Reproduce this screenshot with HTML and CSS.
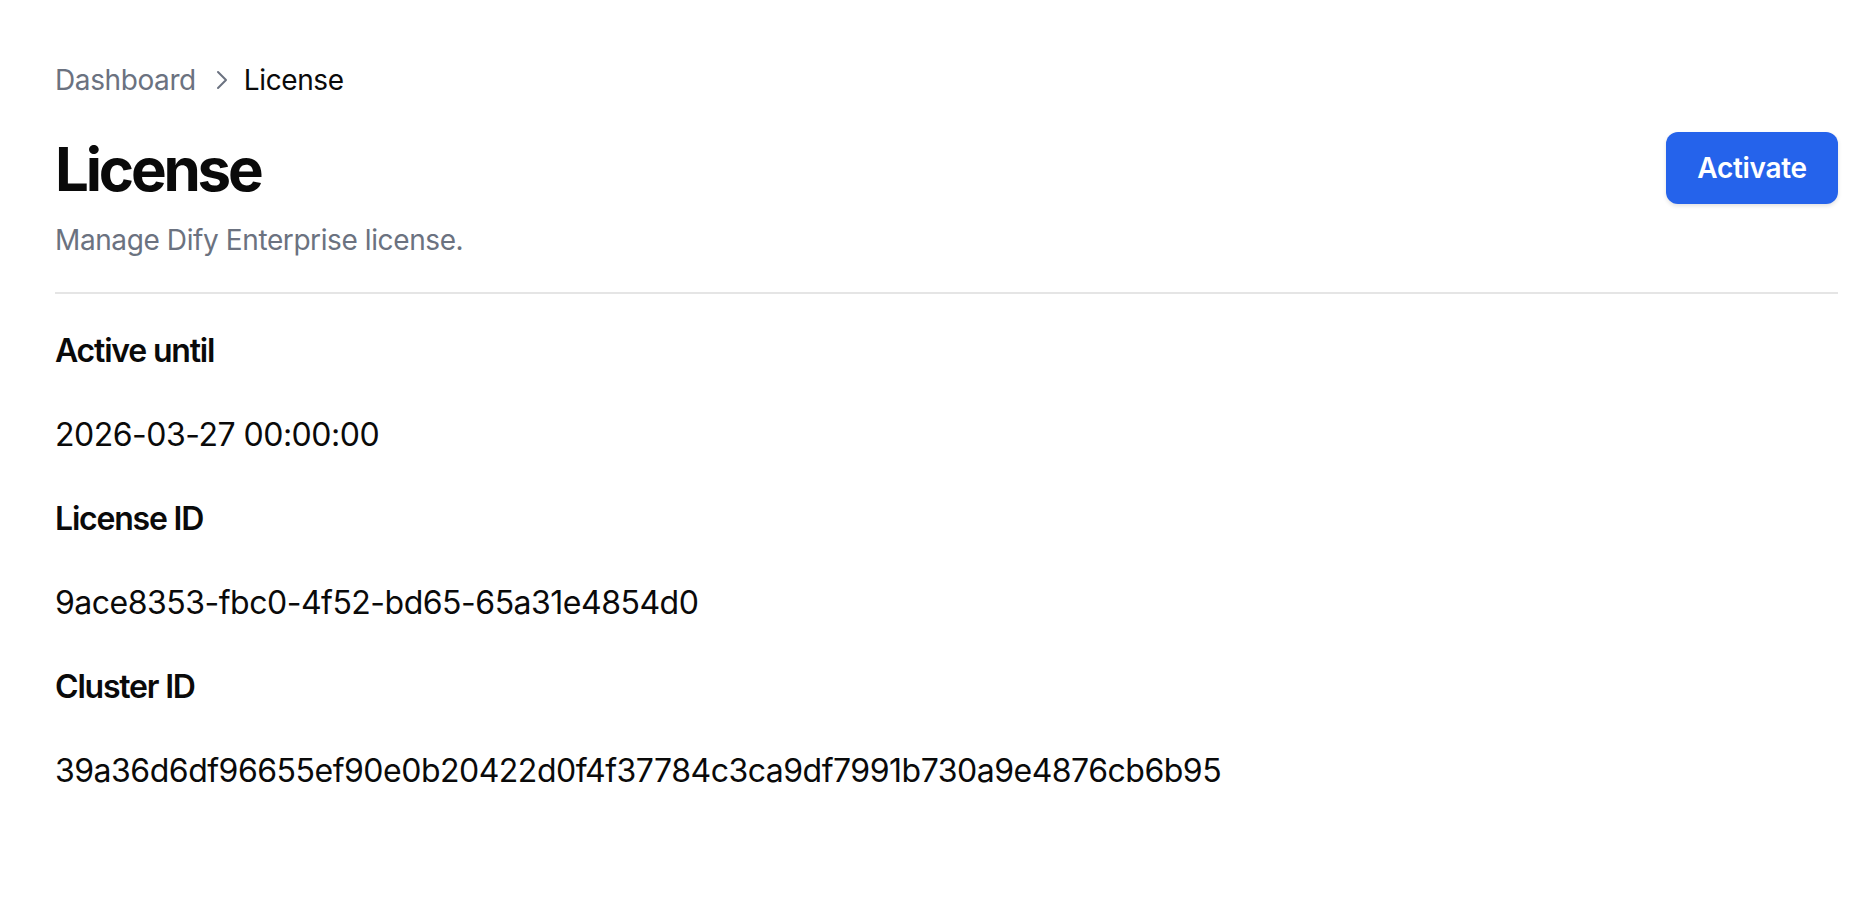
FILE: index.html
```html
<!DOCTYPE html>
<html lang="en">
<head>
  <meta charset="UTF-8" />
  <meta name="viewport" content="width=device-width, initial-scale=1.0"/>
  <title>License</title>
  <link rel="stylesheet" href="styles.css">
</head>
<body>
  <main class="page">
    <nav class="crumbs">
      <a href="#" class="crumbs__link">Dashboard</a>
      <svg class="crumbs__sep" viewBox="0 0 24 24" width="32" height="32" fill="none" stroke="currentColor" stroke-width="1.5" stroke-linecap="round" stroke-linejoin="round">
        <path d="M9 6l6 6-6 6"/>
      </svg>
      <span class="crumbs__current">License</span>
    </nav>

    <header class="head">
      <div class="head__text">
        <h1 class="head__title">License</h1>
        <p class="head__sub">Manage Dify Enterprise license.</p>
      </div>
      <button class="btn" type="button">Activate</button>
    </header>

    <dl class="info">
      <dt>Active until</dt>
      <dd>2026-03-27 00:00:00</dd>
      <dt>License ID</dt>
      <dd>9ace8353-fbc0-4f52-bd65-65a31e4854d0</dd>
      <dt>Cluster ID</dt>
      <dd>39a36d6df96655ef90e0b20422d0f4f37784c3ca9df7991b730a9e4876cb6b95</dd>
    </dl>
  </main>
</body>
</html>
```

FILE: styles.css
```css
html, body {
  height: 100%;
}

body {
  margin: 0;
  font-family: Inter, "Noto Sans", sans-serif;
  background: #fff;
  color: #0a0a0a;
}

.page {
  padding: 60px 26px 0 55px;
}

.crumbs {
  display: flex;
  align-items: center;
  font-size: 28px;
  line-height: 40px;
  letter-spacing: -0.4px;
}

.crumbs__link {
  color: #6b7280;
  text-decoration: none;
}

.crumbs__sep {
  width: 32px;
  height: 32px;
  color: #6b7280;
  margin: 0 6px 0 10px;
}

.crumbs__current {
  color: #0a0a0a;
}

.head {
  display: flex;
  justify-content: space-between;
  align-items: flex-start;
  margin-top: 33px;
  padding-bottom: 32px;
  border-bottom: 2px solid #e5e5e5;
}

.head__title {
  margin: 0;
  font-size: 60px;
  line-height: 72px;
  font-weight: 700;
  letter-spacing: -3.2px;
}

.head__sub {
  margin: 15px 0 0;
  font-size: 28px;
  line-height: 40px;
  letter-spacing: -0.4px;
  color: #6b7280;
}

.btn {
  margin-top: -1px;
  width: 172px;
  height: 72px;
  border: none;
  border-radius: 12px;
  background: #2563eb;
  color: #fff;
  font-family: inherit;
  font-size: 28px;
  font-weight: 600;
  letter-spacing: -0.3px;
  box-shadow: 0 2px 4px rgba(0, 0, 0, 0.12);
  cursor: pointer;
}

.info {
  margin: 0;
  padding-top: 33px;
  display: flex;
  flex-direction: column;
  gap: 36px;
}

.info dt {
  font-size: 32px;
  line-height: 48px;
  font-weight: 600;
  letter-spacing: -1.2px;
}

.info dd {
  margin: 0;
  font-size: 32px;
  line-height: 48px;
  letter-spacing: -0.5px;
}
```
